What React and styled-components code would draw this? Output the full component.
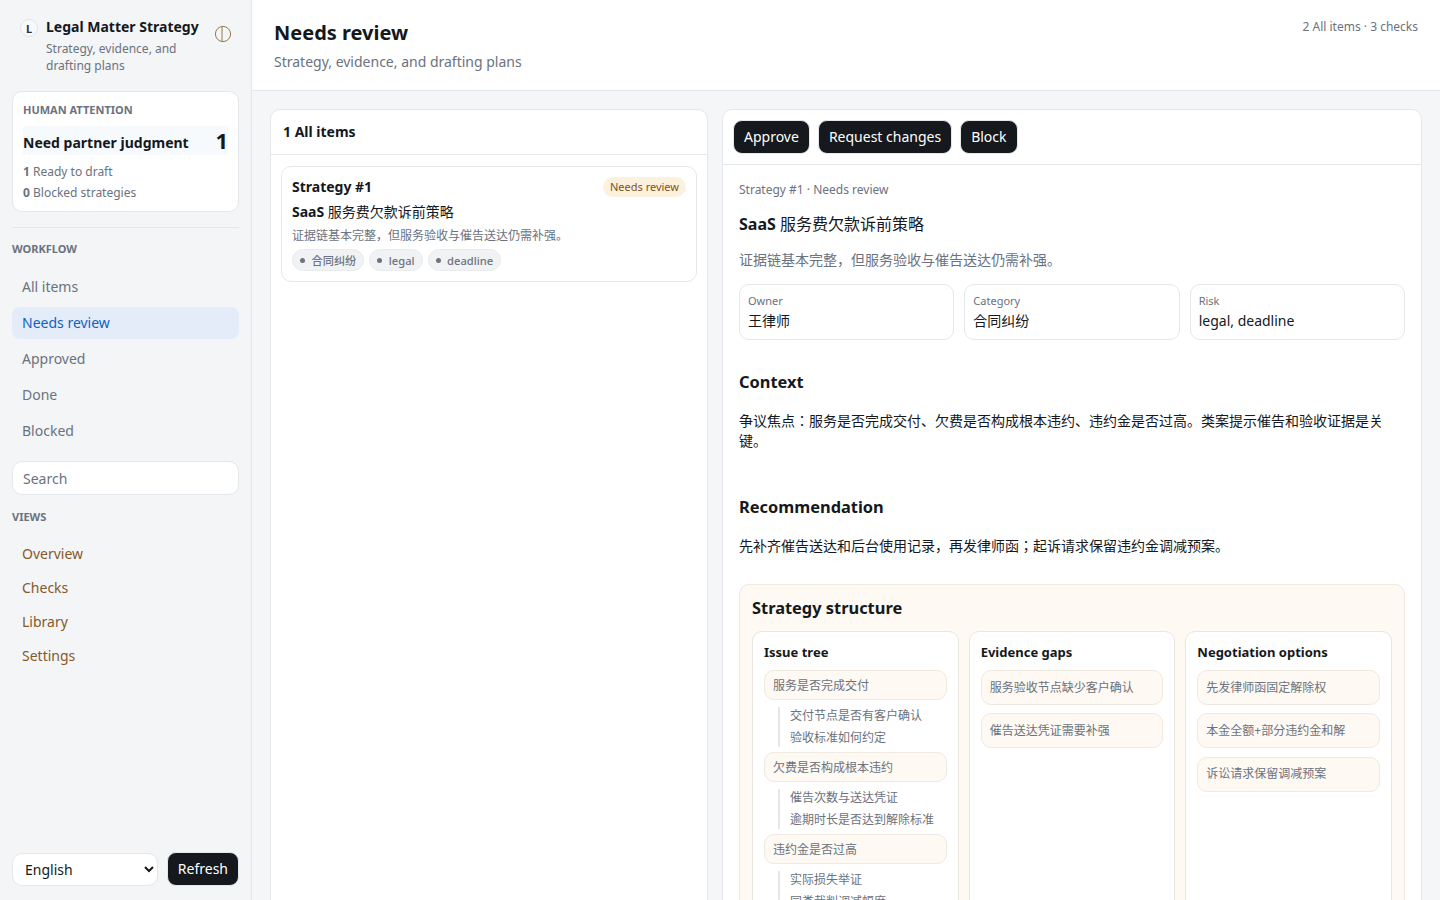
import React from 'react';
import styled, { createGlobalStyle } from 'styled-components';

const Global = createGlobalStyle`
  html, body { margin: 0; padding: 0; height: 900px; overflow: hidden; }
  body {
    font-family: "Noto Sans", "Noto Sans CJK JP", sans-serif;
    color: #15181c;
    background: #f4f6f8;
  }
  * { box-sizing: border-box; }
`;

const Shell = styled.div`
  display: grid;
  grid-template-columns: 252px 1fr;
  height: 900px;
  overflow: hidden;
`;

const Sidebar = styled.aside`
  display: flex;
  flex-direction: column;
  height: 900px;
  padding: 12px;
  background: #f3f5f7;
  border-right: 1px solid #e4e7eb;
`;

const Brand = styled.div`
  display: flex;
  align-items: flex-start;
  padding: 5px 8px 0;
  height: 79px;
`;

const BrandMark = styled.div`
  flex: none;
  display: flex;
  align-items: center;
  justify-content: center;
  width: 18px;
  height: 18px;
  margin-top: 2px;
  margin-right: 8px;
  border: 1px solid #e1e4e8;
  border-radius: 50%;
  background: #f8f9fa;
  font-size: 11px;
  font-weight: 700;
  color: #2a3038;
`;

const BrandText = styled.div`
  flex: 1;
  min-width: 0;
`;

const BrandTitle = styled.div`
  font-size: 14px;
  line-height: 19px;
  font-weight: 700;
  white-space: nowrap;
`;

const BrandSub = styled.div`
  margin-top: 4px;
  width: 140px;
  font-size: 12px;
  line-height: 17px;
  color: #6b7280;
`;

const ThemeIcon = styled.svg`
  flex: none;
  width: 18px;
  height: 18px;
  margin-top: 8px;
  margin-right: -1px;
`;

const AttentionCard = styled.section`
  height: 121px;
  padding: 10px 10px 0;
  background: #fff;
  border: 1px solid #e4e7eb;
  border-radius: 10px;
`;

const CardLabel = styled.div`
  font-size: 11px;
  line-height: 16px;
  font-weight: 700;
  color: #6b7280;
  text-transform: uppercase;
`;

const AttentionRow = styled.div`
  display: flex;
  align-items: center;
  justify-content: space-between;
  height: 29px;
  margin-top: 8px;
  background: #f6fafd;
  font-size: 14px;
  font-weight: 700;
`;

const AttentionName = styled.span`
  margin-top: 4px;
`;

const AttentionCount = styled.span`
  font-size: 22px;
  line-height: 29px;
  font-weight: 700;
`;

const AttentionStat = styled.div`
  margin-top: ${p => p.$top}px;
  font-size: 12px;
  line-height: 17px;
  color: #6b7280;
  b { font-weight: 700; }
`;

const Divider = styled.hr`
  width: 100%;
  margin: 15px 0 0;
  border: 0;
  border-top: 1px solid #e4e7eb;
`;

const SectionLabel = styled.div`
  margin-top: ${p => p.$top}px;
  font-size: 11px;
  line-height: 16px;
  font-weight: 700;
  color: #6b7280;
  text-transform: uppercase;
`;

const Nav = styled.nav`
  display: flex;
  flex-direction: column;
  gap: ${p => p.$gap}px;
  margin-top: ${p => p.$top}px;
`;

const NavItem = styled.a`
  display: flex;
  align-items: center;
  height: 32px;
  padding: 0 10px 2px;
  border-radius: 8px;
  font-size: 14px;
  color: ${p => (p.$active ? '#0f62c4' : '#6b7280')};
  background: ${p => (p.$active ? '#e3ecf8' : 'transparent')};
`;

const ViewItem = styled.a`
  display: flex;
  align-items: center;
  height: 30px;
  padding: 0 10px;
  font-size: 14px;
  color: #86592a;
`;

const SearchBox = styled.input`
  display: block;
  width: 100%;
  height: 34px;
  margin-top: 14px;
  padding: 0 10px;
  background: #fff;
  border: 1px solid #e4e7eb;
  border-radius: 10px;
  font: 14px "Noto Sans", sans-serif;
  outline: none;
  &::placeholder { color: #6b7280; opacity: 1; }
`;

const SidebarFoot = styled.div`
  display: flex;
  align-items: center;
  gap: 9px;
  margin-top: auto;
  margin-bottom: 2px;
`;

const LangSelect = styled.select`
  flex: 1;
  min-width: 0;
  height: 33px;
  padding: 0 8px;
  background: #fff;
  border: 1px solid #e4e7eb;
  border-radius: 10px;
  font: 14px "Noto Sans", sans-serif;
  color: #15181c;
`;

const DarkButton = styled.button`
  flex: none;
  height: 34px;
  padding: 0 10px 2px;
  background: #15181c;
  color: #fff;
  border: 1px solid #e4e7eb;
  border-radius: 9px;
  font: 14px "Noto Sans", "Noto Sans CJK JP", sans-serif;
`;

const Main = styled.main`
  display: flex;
  flex-direction: column;
  min-width: 0;
  height: 900px;
`;

const Topbar = styled.header`
  display: flex;
  justify-content: space-between;
  flex: none;
  height: 91px;
  padding: 18px 22px 0;
  background: #fff;
  border-bottom: 1px solid #e4e7eb;
`;

const PageTitle = styled.h1`
  margin: 0;
  font-size: 20px;
  line-height: 30px;
  font-weight: 700;
`;

const PageSub = styled.p`
  margin: 4px 0 0;
  font-size: 14px;
  line-height: 20px;
  color: #6b7280;
`;

const TopMeta = styled.div`
  font-size: 12px;
  line-height: 18px;
  color: #6b7280;
`;

const Columns = styled.div`
  display: grid;
  grid-template-columns: 438px 700px;
  gap: 14px;
  padding: 18px 18px 0;
  flex: 1;
  min-height: 0;
`;

const Panel = styled.section`
  display: flex;
  flex-direction: column;
  height: 860px;
  background: #fff;
  border: 1px solid #e4e7eb;
  border-radius: 10px;
  overflow: hidden;
`;

const ListHead = styled.div`
  flex: none;
  height: 45px;
  padding: 12px 12px 0;
  border-bottom: 1px solid #e4e7eb;
  font-size: 14px;
  line-height: 20px;
  font-weight: 700;
`;

const ActionBar = styled.div`
  display: flex;
  align-items: center;
  gap: 8px;
  flex: none;
  height: 55px;
  padding: 0 10px;
  border-bottom: 1px solid #e4e7eb;
`;

const ItemCard = styled.article`
  margin: 11px 10px 0;
  height: 116px;
  padding: 9px 10px;
  border: 1px solid #e4e7eb;
  border-radius: 10px;
`;

const ItemTop = styled.div`
  display: flex;
  align-items: center;
  justify-content: space-between;
  height: 20px;
  font-size: 14px;
  font-weight: 700;
`;

const StatusPill = styled.span`
  margin-top: 2px;
  padding: 0 7px;
  height: 20px;
  border-radius: 10px;
  background: #fdf0dc;
  color: #7a5526;
  font-size: 11px;
  line-height: 20px;
  font-weight: 400;
`;

const ItemTitle = styled.div`
  margin-top: 6px;
  font-size: 14px;
  line-height: 20px;
  font-weight: 400;
  b { font-weight: 700; }
`;

const ItemDesc = styled.div`
  margin-top: 5px;
  font-size: 12px;
  line-height: 18px;
  color: #6b7280;
`;

const Tags = styled.div`
  display: flex;
  gap: 5px;
  margin-top: 4px;
`;

const Tag = styled.span`
  display: inline-flex;
  align-items: center;
  gap: 6.5px;
  height: 22px;
  padding: 0 7px;
  border: 1px solid #e9ebee;
  border-radius: 11px;
  background: #f1f2f4;
  color: #6b7280;
  font-size: 11.2px;
  font-weight: 500;
  &::before {
    content: "";
    width: 5px;
    height: 5px;
    border-radius: 50%;
    background: #6b7280;
  }
`;

const Detail = styled.div`
  padding: 16px 16px 0;
`;

const Crumb = styled.div`
  font-size: 12px;
  line-height: 18px;
  color: #6b7280;
`;

const DetailTitle = styled.h2`
  margin: 13px 0 0;
  font-size: 16px;
  line-height: 24px;
  font-weight: 400;
  b { font-weight: 700; }
`;

const DetailDesc = styled.p`
  margin: 14px 0 0;
  font-size: 14px;
  line-height: 20px;
  color: #6b7280;
`;

const Facts = styled.div`
  display: grid;
  grid-template-columns: repeat(3, 1fr);
  gap: 10px;
  margin-top: 14px;
`;

const Fact = styled.div`
  height: 56px;
  padding: 8px;
  border: 1px solid #e4e7eb;
  border-radius: 10px;
`;

const FactLabel = styled.div`
  font-size: 11px;
  line-height: 16px;
  color: #6b7280;
`;

const FactValue = styled.div`
  margin-top: 2px;
  font-size: 14px;
  line-height: 20px;
`;

const SectionTitle = styled.h3`
  margin: ${p => p.$top}px 0 0;
  font-size: 16.4px;
  line-height: 24px;
  font-weight: 700;
`;

const BodyText = styled.p`
  margin: ${p => p.$top}px 0 0;
  font-size: 14px;
  line-height: 20px;
`;

const Structure = styled.section`
  margin-top: 28px;
  padding: 11px 12px 12px;
  background: #fef9f2;
  border: 1px solid #efe9df;
  border-radius: 10px;
  height: 400px;
`;

const StructureTitle = styled.div`
  font-size: 16.4px;
  line-height: 24px;
  font-weight: 700;
`;

const StructureGrid = styled.div`
  display: grid;
  grid-template-columns: repeat(3, 1fr);
  gap: 10px;
  margin-top: 11px;
`;

const StructureCol = styled.div`
  height: 340px;
  padding: 10px 11px;
  background: #fff;
  border: 1px solid #e9e6e0;
  border-radius: 10px;
`;

const ColTitle = styled.div`
  margin-bottom: 8px;
  font-size: 13px;
  line-height: 20px;
  font-weight: 700;
`;

const IssueNode = styled.div`
  display: flex;
  align-items: center;
  height: 30px;
  padding: 0 8px;
  background: #fef9f2;
  border: 1px solid #efe9df;
  border-radius: 10px;
  font-size: 12px;
  color: #6b7280;
`;

const NodeStack = styled.div`
  display: flex;
  flex-direction: column;
  gap: 8.25px;
`;

const CardNode = styled(IssueNode)`
  height: 35px;
  padding-bottom: 2px;
`;

const SubList = styled.div`
  display: flex;
  flex-direction: column;
  gap: 4px;
  margin: 7px 0 5px 14px;
  padding-left: 10px;
  border-left: 2px solid #e4e7eb;
  font-size: 12px;
  line-height: 18px;
  color: #6b7280;
`;

const tree = [
  ['服务是否完成交付', ['交付节点是否有客户确认', '验收标准如何约定']],
  ['欠费是否构成根本违约', ['催告次数与送达凭证', '逾期时长是否达到解除标准']],
  ['违约金是否过高', ['实际损失举证', '同类裁判调减幅度']],
];

export default function App() {
  return (
    <>
      <Global />
      <Shell>
        <Sidebar>
          <Brand>
            <BrandMark>L</BrandMark>
            <BrandText>
              <BrandTitle>Legal Matter Strategy</BrandTitle>
              <BrandSub>Strategy, evidence, and drafting plans</BrandSub>
            </BrandText>
            <ThemeIcon viewBox="0 0 18 18" fill="none" stroke="#9a7a4a" strokeWidth="1">
              <circle cx="9" cy="9" r="7.6" />
              <line x1="8" y1="1.5" x2="8" y2="16.5" />
            </ThemeIcon>
          </Brand>

          <AttentionCard>
            <CardLabel>Human attention</CardLabel>
            <AttentionRow>
              <AttentionName>Need partner judgment</AttentionName>
              <AttentionCount>1</AttentionCount>
            </AttentionRow>
            <AttentionStat $top={8}><b>1</b> Ready to draft</AttentionStat>
            <AttentionStat $top={4}><b>0</b> Blocked strategies</AttentionStat>
          </AttentionCard>
          <Divider />

          <SectionLabel $top={13}>Workflow</SectionLabel>
          <Nav $gap={4} $top={14}>
            <NavItem>All items</NavItem>
            <NavItem $active>Needs review</NavItem>
            <NavItem>Approved</NavItem>
            <NavItem>Done</NavItem>
            <NavItem>Blocked</NavItem>
          </Nav>
          <SearchBox placeholder="Search" />

          <SectionLabel $top={14}>Views</SectionLabel>
          <Nav $gap={4} $top={13}>
            <ViewItem>Overview</ViewItem>
            <ViewItem>Checks</ViewItem>
            <ViewItem>Library</ViewItem>
            <ViewItem>Settings</ViewItem>
          </Nav>

          <SidebarFoot>
            <LangSelect defaultValue="English">
              <option>English</option>
            </LangSelect>
            <DarkButton>Refresh</DarkButton>
          </SidebarFoot>
        </Sidebar>

        <Main>
          <Topbar>
            <div>
              <PageTitle>Needs review</PageTitle>
              <PageSub>Strategy, evidence, and drafting plans</PageSub>
            </div>
            <TopMeta>2 All items · 3 checks</TopMeta>
          </Topbar>

          <Columns>
            <Panel>
              <ListHead>1 All items</ListHead>
              <ItemCard>
                <ItemTop>
                  Strategy #1
                  <StatusPill>Needs review</StatusPill>
                </ItemTop>
                <ItemTitle><b>SaaS</b> 服务费欠款诉前策略</ItemTitle>
                <ItemDesc>证据链基本完整，但服务验收与催告送达仍需补强。</ItemDesc>
                <Tags>
                  <Tag>合同纠纷</Tag>
                  <Tag>legal</Tag>
                  <Tag>deadline</Tag>
                </Tags>
              </ItemCard>
            </Panel>

            <Panel>
              <ActionBar>
                <DarkButton>Approve</DarkButton>
                <DarkButton>Request changes</DarkButton>
                <DarkButton>Block</DarkButton>
              </ActionBar>
              <Detail>
                <Crumb>Strategy #1 · Needs review</Crumb>
                <DetailTitle><b>SaaS</b> 服务费欠款诉前策略</DetailTitle>
                <DetailDesc>证据链基本完整，但服务验收与催告送达仍需补强。</DetailDesc>
                <Facts>
                  <Fact><FactLabel>Owner</FactLabel><FactValue>王律师</FactValue></Fact>
                  <Fact><FactLabel>Category</FactLabel><FactValue>合同纠纷</FactValue></Fact>
                  <Fact><FactLabel>Risk</FactLabel><FactValue>legal, deadline</FactValue></Fact>
                </Facts>

                <SectionTitle $top={30}>Context</SectionTitle>
                <BodyText $top={17}>争议焦点：服务是否完成交付、欠费是否构成根本违约、违约金是否过高。类案提示催告和验收证据是关键。</BodyText>

                <SectionTitle $top={44}>Recommendation</SectionTitle>
                <BodyText $top={17}>先补齐催告送达和后台使用记录，再发律师函；起诉请求保留违约金调减预案。</BodyText>

                <Structure>
                  <StructureTitle>Strategy structure</StructureTitle>
                  <StructureGrid>
                    <StructureCol>
                      <ColTitle>Issue tree</ColTitle>
                      {tree.map(([issue, subs]) => (
                        <React.Fragment key={issue}>
                          <IssueNode>{issue}</IssueNode>
                          <SubList>
                            {subs.map(s => <div key={s}>{s}</div>)}
                          </SubList>
                        </React.Fragment>
                      ))}
                    </StructureCol>
                    <StructureCol>
                      <ColTitle>Evidence gaps</ColTitle>
                      <NodeStack>
                        <CardNode>服务验收节点缺少客户确认</CardNode>
                        <CardNode>催告送达凭证需要补强</CardNode>
                      </NodeStack>
                    </StructureCol>
                    <StructureCol>
                      <ColTitle>Negotiation options</ColTitle>
                      <NodeStack>
                        <CardNode>先发律师函固定解除权</CardNode>
                        <CardNode>本金全额+部分违约金和解</CardNode>
                        <CardNode>诉讼请求保留调减预案</CardNode>
                      </NodeStack>
                    </StructureCol>
                  </StructureGrid>
                </Structure>
              </Detail>
            </Panel>
          </Columns>
        </Main>
      </Shell>
    </>
  );
}
